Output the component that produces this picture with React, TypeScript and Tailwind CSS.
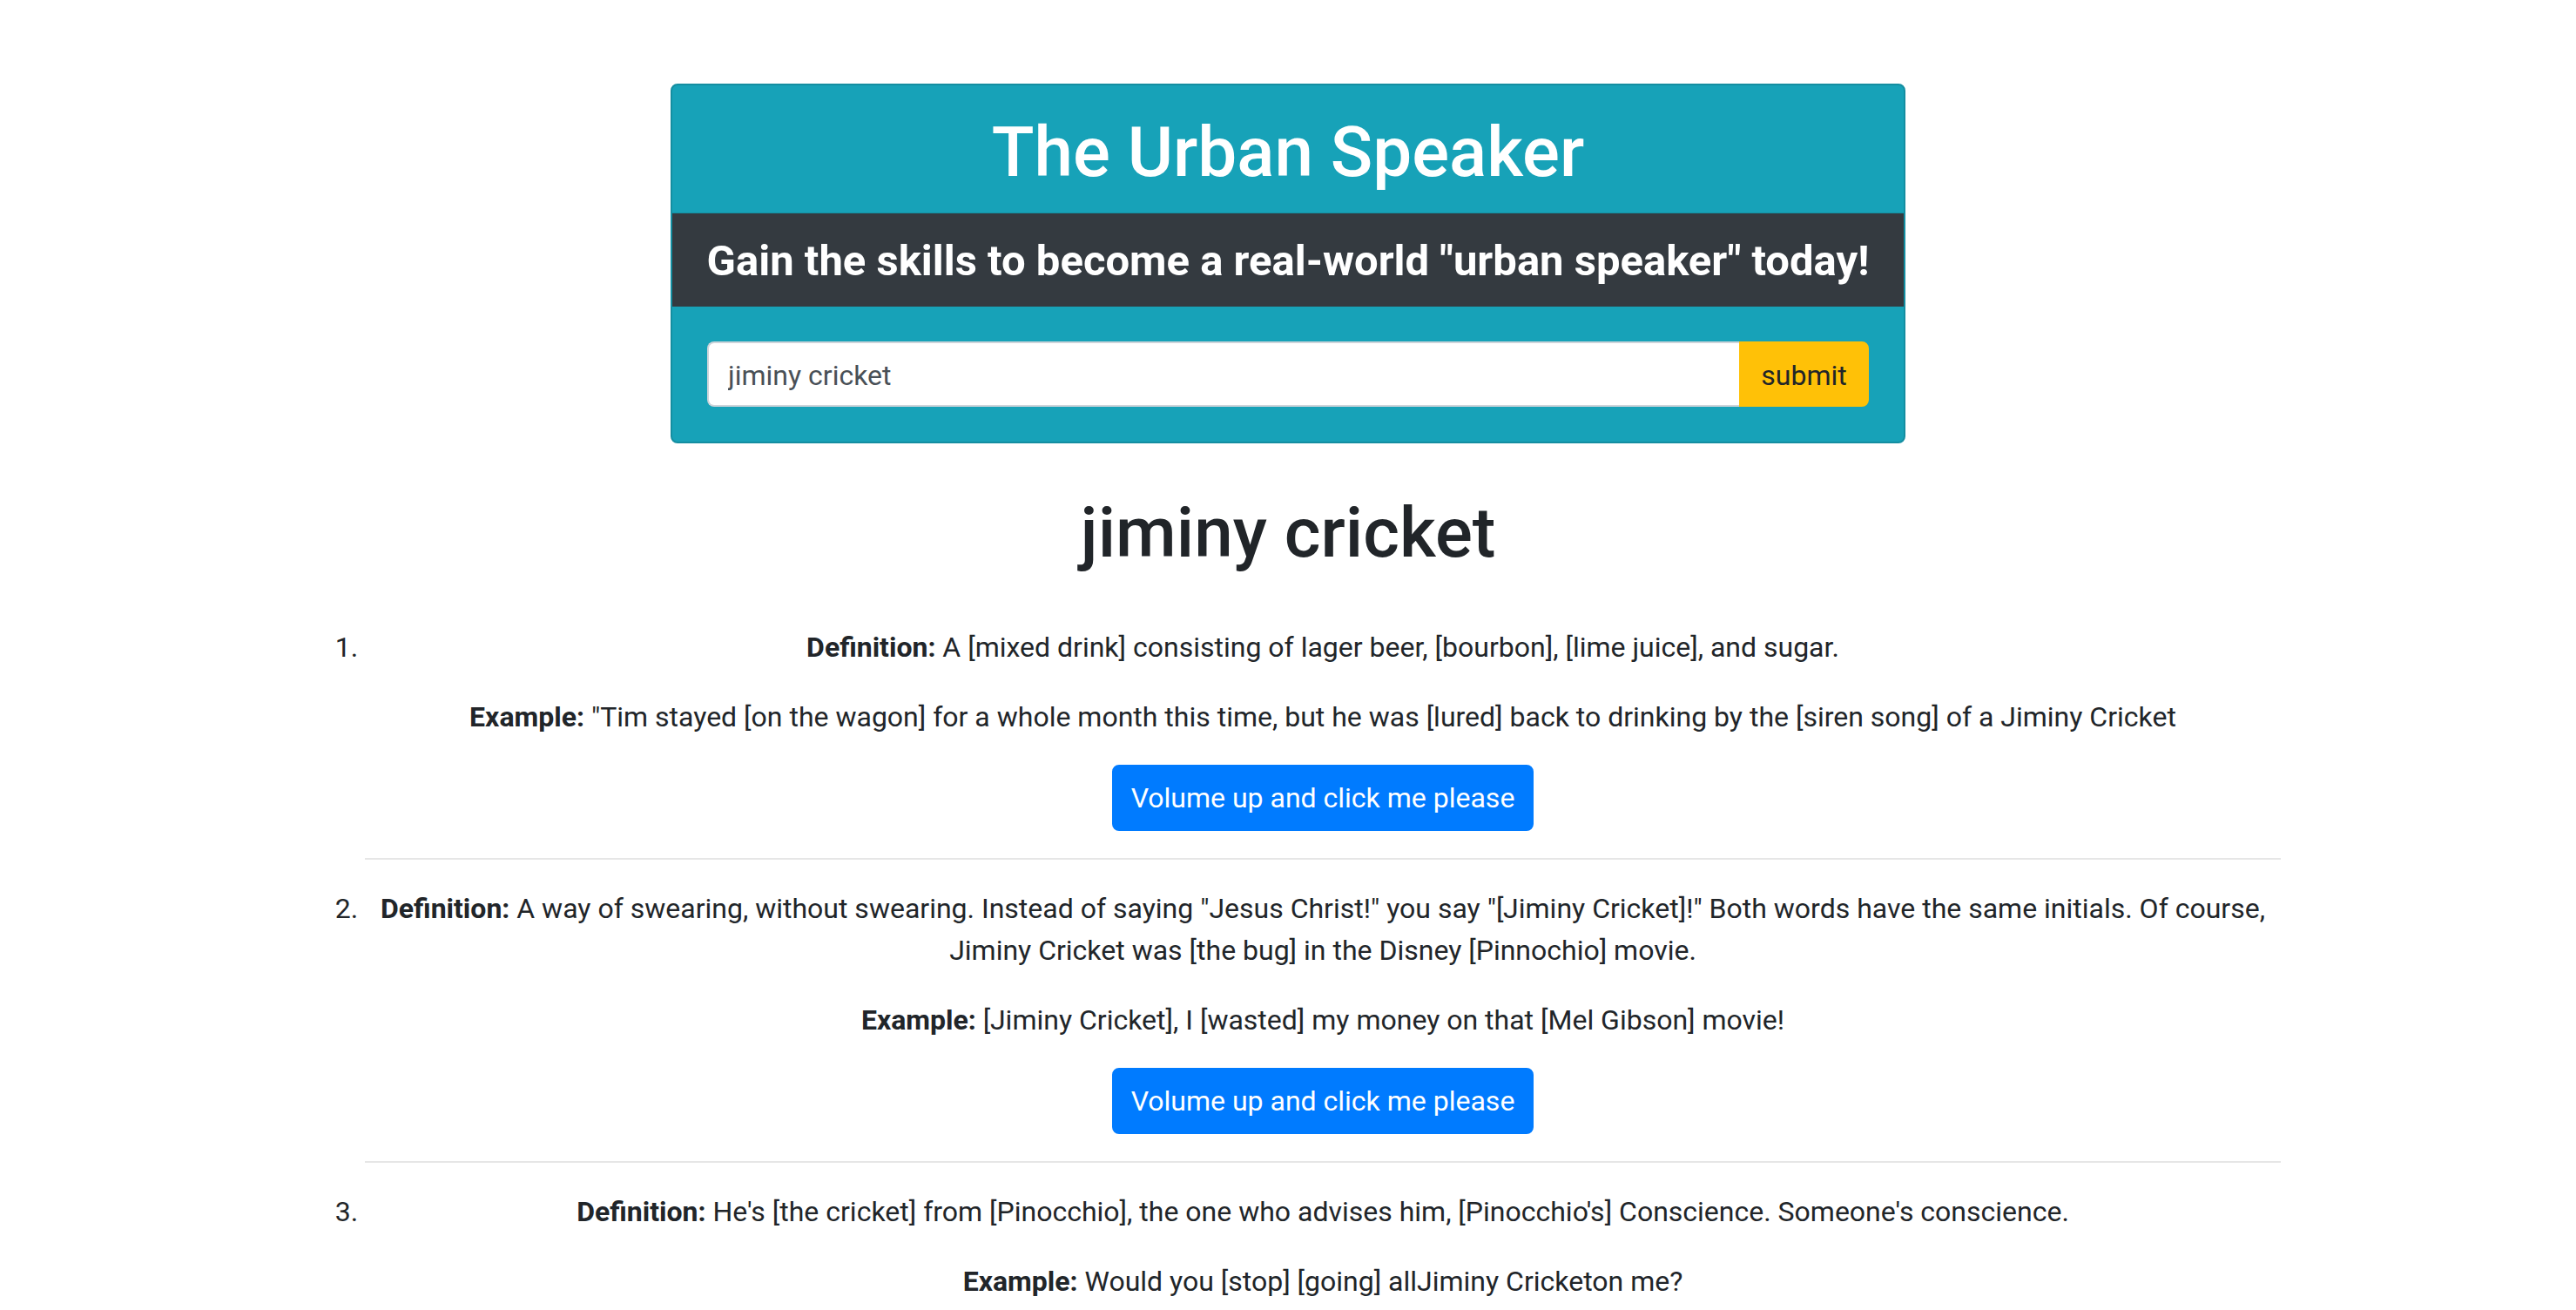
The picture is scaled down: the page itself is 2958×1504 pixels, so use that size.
import React from "react";

type Entry = {
  def: React.ReactNode;
  ex: React.ReactNode;
};

const entries: Entry[] = [
  {
    def: "A [mixed drink] consisting of lager beer, [bourbon], [lime juice], and sugar.",
    ex: '"Tim stayed [on the wagon] for a whole month this time, but he was [lured] back to drinking by the [siren song] of a Jiminy Cricket',
  },
  {
    def: 'A way of swearing, without swearing. Instead of saying "Jesus Christ!" you say "[Jiminy Cricket]!" Both words have the same initials. Of course, Jiminy Cricket was [the bug] in the Disney [Pinnochio] movie.',
    ex: "[Jiminy Cricket], I [wasted] my money on that [Mel Gibson] movie!",
  },
  {
    def: "He's [the cricket] from [Pinocchio], the one who advises him, [Pinocchio's] Conscience. Someone's conscience.",
    ex: "Would you [stop] [going] allJiminy Cricketon me?",
  },
];

export default function App() {
  return (
    <div className="min-h-screen bg-white font-['Roboto',sans-serif] text-[#212529]">
      <div className="mx-auto mt-[96px] w-[1418px] overflow-hidden rounded-[8px] border-2 border-[#148ea1] bg-[#17a2b8]">
        <div className="border-b border-[#148ea1] pt-[29px] pb-[21px] text-center text-[80px] leading-[96px] font-medium text-white">
          The Urban Speaker
        </div>
        <div className="bg-[#343a40] pt-[25px] pb-[23px] text-center text-[49px] leading-[59px] font-bold text-white">
          Gain the skills to become a real-world "urban speaker" today!
        </div>
        <div className="flex px-[40px] pt-[40px] pb-[40px]">
          <input
            readOnly
            defaultValue="jiminy cricket"
            className="h-[75px] flex-1 rounded-l-[8px] border-2 border-r-0 border-[#ced4da] bg-white pl-[22px] pt-[2px] text-[32px] text-[#495057] outline-none"
          />
          <button className="h-[75px] w-[149px] rounded-r-[8px] border-2 border-[#ffc107] bg-[#ffc107] pt-[2px] text-[32px] text-[#212529]">
            submit
          </button>
        </div>
      </div>

      <h1 className="mt-[55px] mb-[59px] text-center text-[80px] leading-[96px] font-medium">jiminy cricket</h1>

      <ol className="mx-auto w-[2280px] list-decimal pl-[80px] text-[32px] leading-[48px]">
        {entries.map((e, i) => (
          <li key={i} className="text-center">
            <p className="mb-[32px]">
              <span className="font-bold">Definition:</span> {e.def}
            </p>
            <p className="mb-[31px]">
              <span className="font-bold">Example:</span> {e.ex}
            </p>
            <button className="h-[76px] rounded-[8px] border-2 border-[#007bff] bg-[#007bff] px-[20px] text-[32px] text-white">
              Volume up and click me please
            </button>
            <hr className="mt-[31px] mb-[32px] border-0 border-t-2 border-[#e6e6e6]" />
          </li>
        ))}
      </ol>
    </div>
  );
}
